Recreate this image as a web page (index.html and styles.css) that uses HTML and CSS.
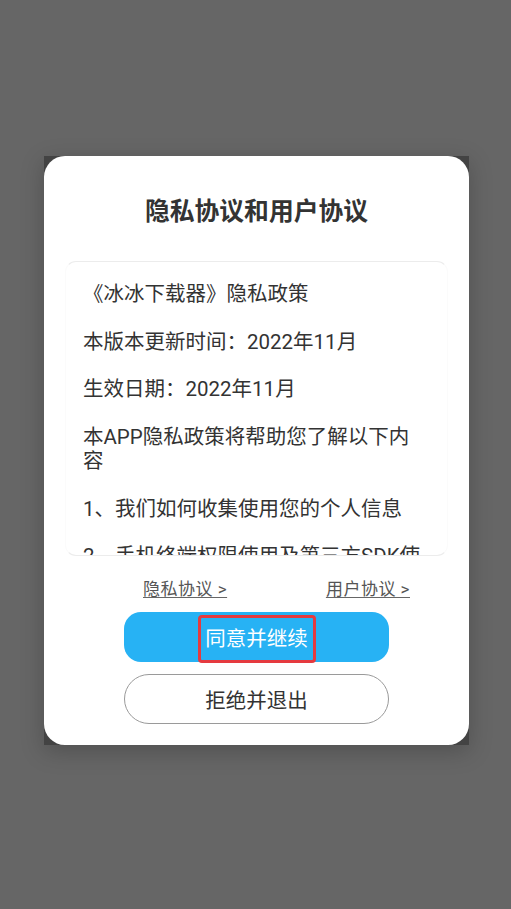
FILE: index.html
```html
<!DOCTYPE html>
<html lang="zh-CN">
<head>
<meta charset="utf-8">
<title>隐私协议和用户协议</title>
<link rel="stylesheet" href="styles.css">
</head>
<body>
<div class="screen">
  <div class="frame">
    <div class="dialog">
      <h1 class="title">隐私协议和用户协议</h1>
      <div class="policy">
        <p>《冰冰下载器》隐私政策</p>
        <p>本版本更新时间：2022年11月</p>
        <p>生效日期：2022年11月</p>
        <p>本APP隐私政策将帮助您了解以下内容</p>
        <p>1、我们如何收集使用您的个人信息</p>
        <p>2、手机终端权限使用及第三方SDK使用情况</p>
        <p>3、我们如何使用Cookie和同类技术</p>
      </div>
      <div class="links">
        <a class="link" href="#">隐私协议 &gt;</a>
        <a class="link" href="#">用户协议 &gt;</a>
      </div>
      <button class="btn btn-agree" type="button">同意并继续<span class="highlight"></span></button>
      <button class="btn btn-refuse" type="button">拒绝并退出</button>
    </div>
  </div>
</div>
</body>
</html>
```

FILE: styles.css
```css
* { box-sizing: border-box; }

html, body {
  margin: 0;
  padding: 0;
  background: #666666;
}

body {
  font-family: "Roboto", "Noto Sans CJK SC", sans-serif;
  color: #333333;
}

.screen {
  width: 511px;
  height: 909px;
  padding-top: 156px;
  padding-left: 2px;
  display: flex;
  flex-direction: column;
  align-items: center;
}

.frame {
  width: 425px;
  background: #434343;
  box-shadow: 0 6px 22px rgba(0, 0, 0, 0.22);
}

.dialog {
  background: #ffffff;
  border-radius: 21px;
  padding: 41px 21px 21px;
  display: flex;
  flex-direction: column;
  align-items: center;
}

.title {
  margin: 0;
  font-size: 24.8px;
  line-height: 30px;
  font-weight: 700;
  color: #333333;
  text-align: center;
}

.policy {
  margin-top: 34px;
  width: 383px;
  height: 295px;
  overflow: hidden;
  border: 1px solid #ececec;
  border-left-color: #fbfbfb;
  border-right-color: #fbfbfb;
  border-radius: 11px;
  padding: 20px 20px 0 17px;
}

.policy p {
  margin: 0 0 23px;
  font-size: 20.5px;
  line-height: 24.5px;
  color: #333333;
}

.links {
  margin-top: 23px;
  width: 100%;
  display: flex;
  justify-content: space-between;
  padding: 0 38px 0 78px;
}

.link {
  font-size: 17px;
  line-height: 20px;
  letter-spacing: 0.5px;
  color: #555555;
  text-decoration: underline;
  text-decoration-color: #666666;
  text-underline-offset: 2px;
}

.btn {
  width: 265px;
  height: 50px;
  border-radius: 17px;
  font-family: "Roboto", "Noto Sans CJK SC", sans-serif;
  font-size: 20.5px;
  padding: 0;
  cursor: pointer;
}

.btn-agree {
  position: relative;
  margin-top: 13px;
  background: #27b2f4;
  color: #ffffff;
  border: none;
}

.highlight {
  position: absolute;
  left: 74px;
  top: 3px;
  width: 118px;
  height: 48px;
  border: 3px solid #e53a3f;
  border-radius: 4px;
}

.btn-refuse {
  margin-top: 12px;
  background: #ffffff;
  color: #333333;
  border: 1px solid #9a9a9a;
  border-radius: 25px;
}
```
